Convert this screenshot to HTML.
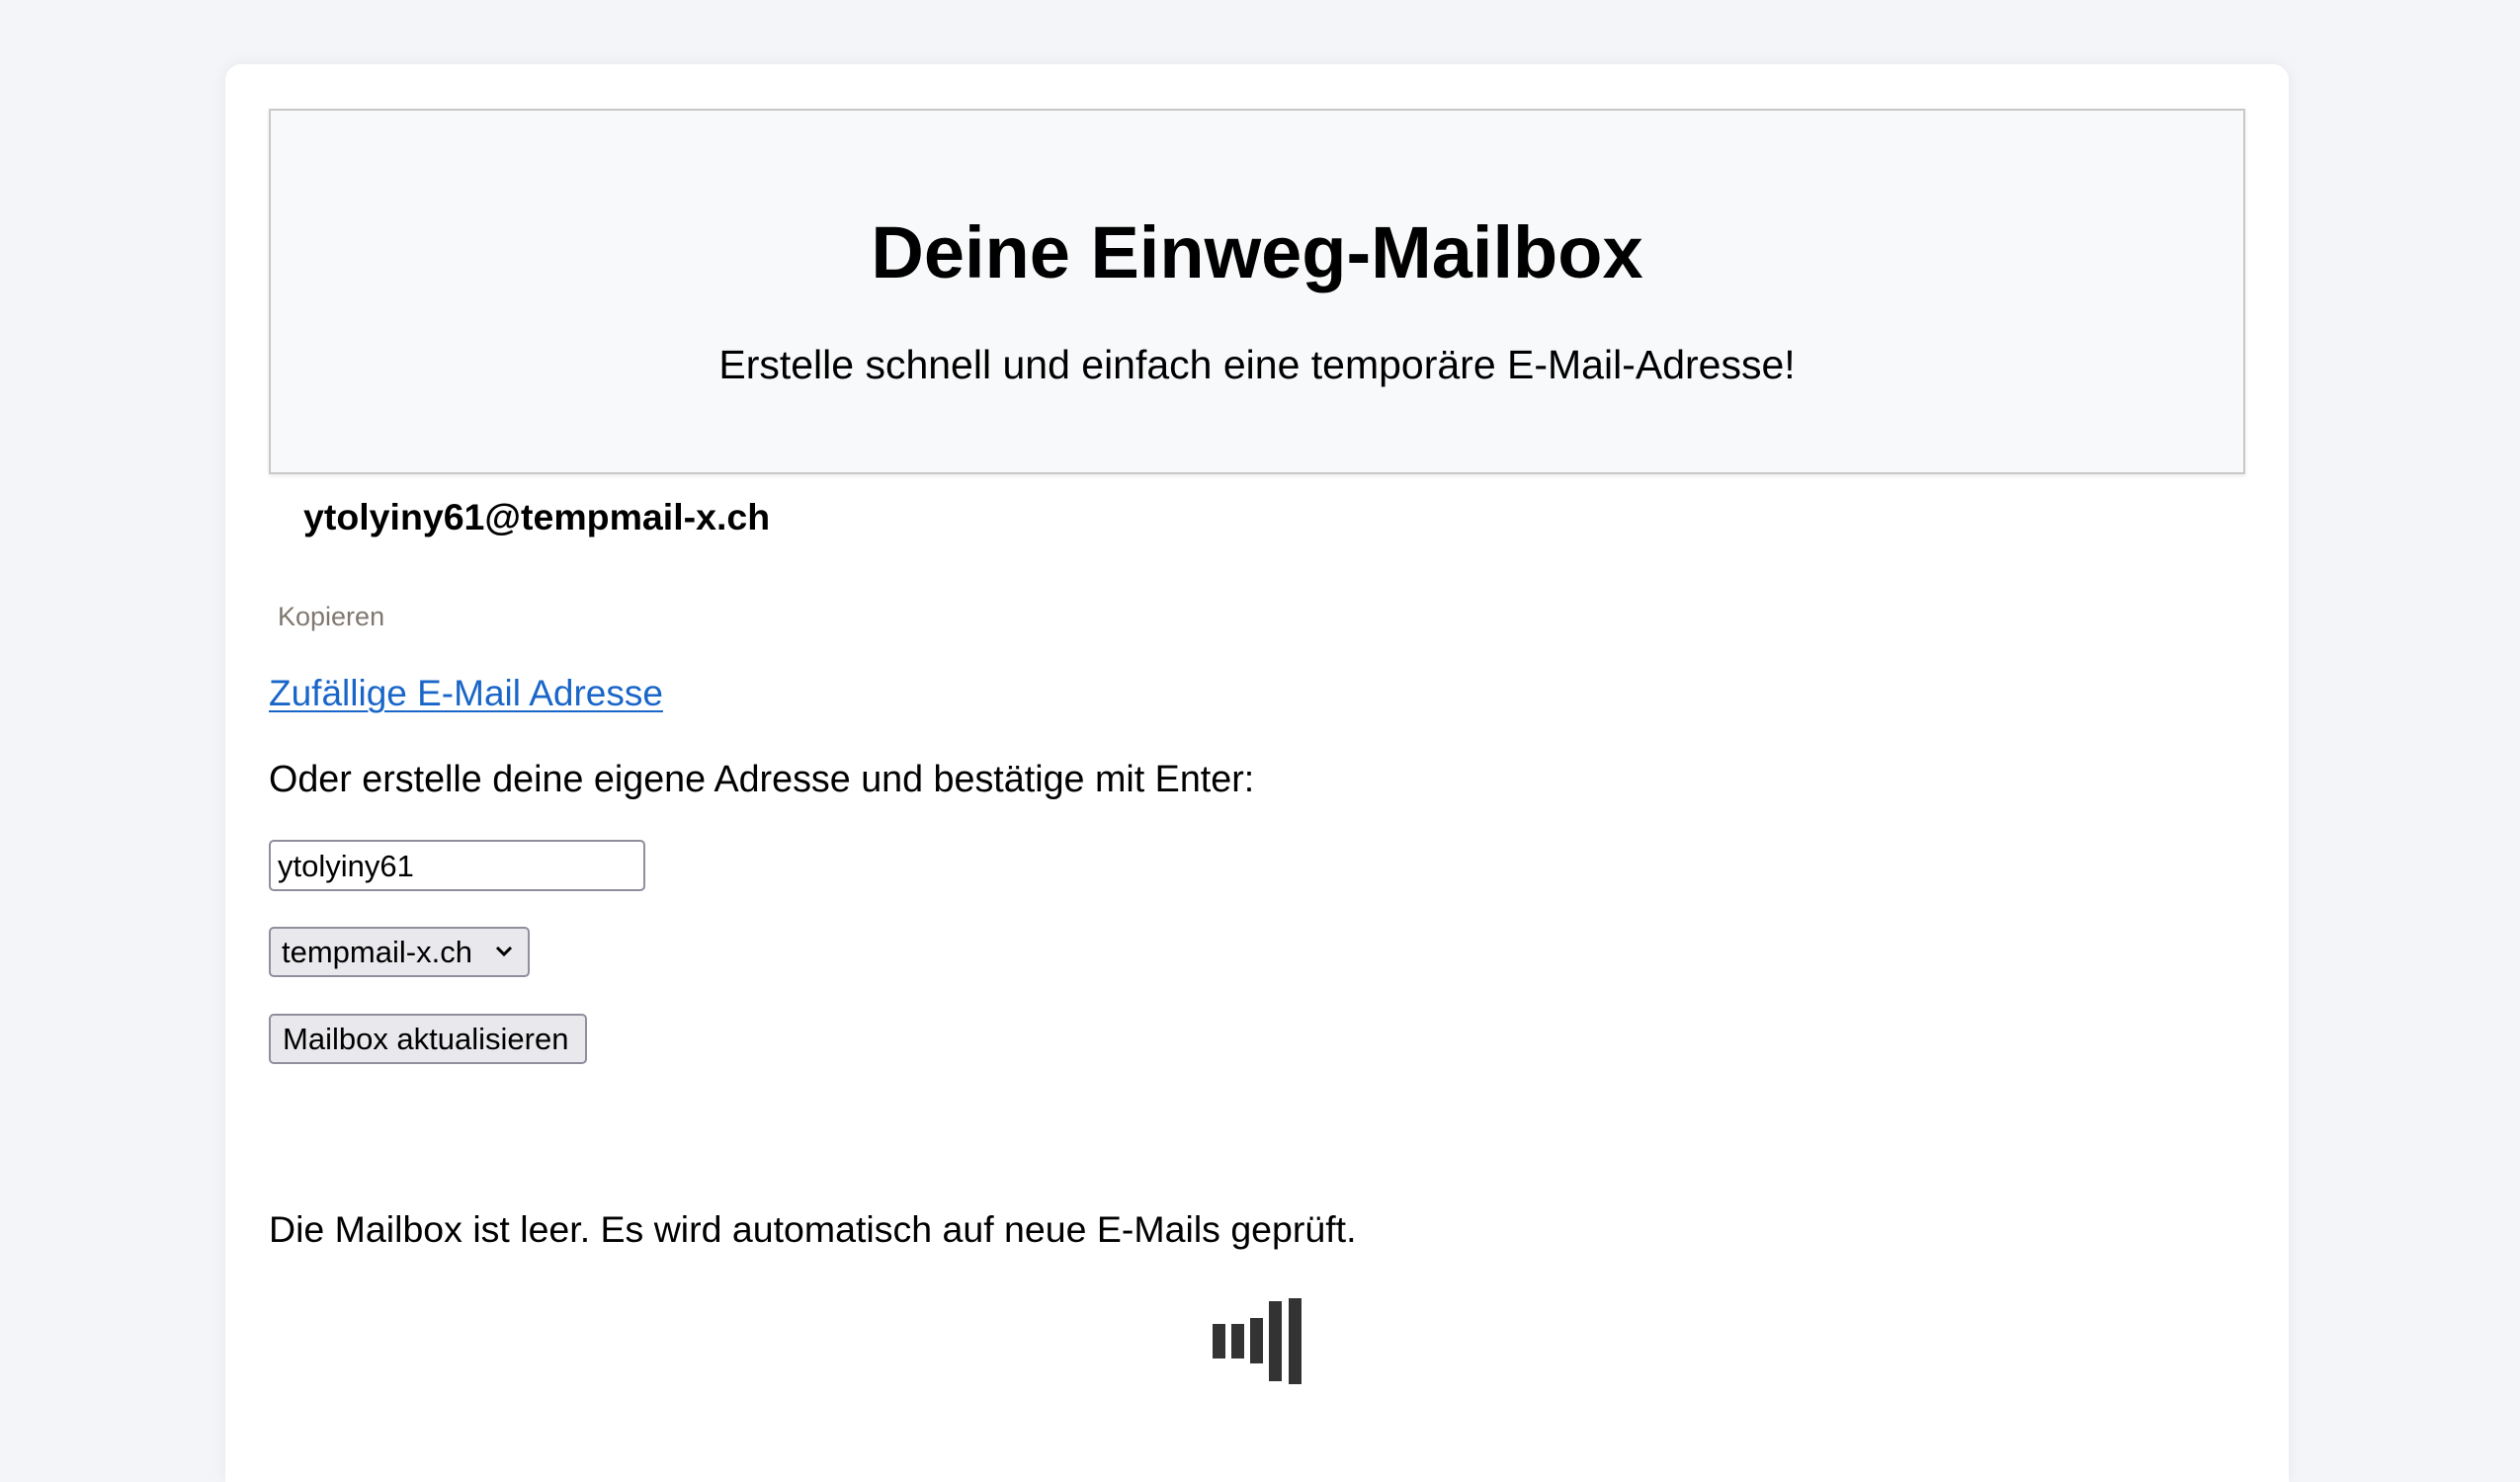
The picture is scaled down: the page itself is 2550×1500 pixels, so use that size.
<!DOCTYPE html>
<html><head><meta charset="utf-8">
<style>
html,body{margin:0;padding:0;width:2550px;height:1500px;overflow:hidden;background:#f4f5f8;font-family:"Liberation Sans",sans-serif;color:#000}
.card{position:absolute;left:228px;top:65px;width:2088px;height:1435px;background:#fff;border-radius:16px 16px 0 0;box-shadow:0 0 16px rgba(0,0,0,0.06)}
.hdr{position:absolute;left:272px;top:110px;width:1996px;height:366px;background:#f8f9fa;border:2px solid #c8c8c8;box-shadow:0 2px 4px rgba(0,0,0,0.08)}
.t{position:absolute;white-space:nowrap}
.in{position:absolute;box-sizing:border-box;border-radius:5px}
.bar{position:absolute;background:#333;width:13px}
</style></head><body>
<div class="card"></div>
<div class="hdr"></div>
<div class="t" style="left:0;width:2544px;text-align:center;top:206px;font-size:74px;font-weight:bold;line-height:100px">Deine Einweg-Mailbox</div>
<div class="t" style="left:0;width:2544px;text-align:center;top:343px;font-size:41px;line-height:52px">Erstelle schnell und einfach eine temporäre E-Mail-Adresse!</div>
<div class="t" style="left:307px;top:498px;font-size:37.5px;font-weight:bold;line-height:50px">ytolyiny61@tempmail-x.ch</div>
<div class="t" style="left:281px;top:606px;font-size:27px;color:#80786f;line-height:36px">Kopieren</div>
<div class="t" style="left:272px;top:677px;font-size:37px;color:#1a66c8;text-decoration:underline;text-decoration-thickness:2px;text-underline-offset:5px;line-height:50px">Zufällige E-Mail Adresse</div>
<div class="t" style="left:272px;top:763px;font-size:37.7px;line-height:50px">Oder erstelle deine eigene Adresse und bestätige mit Enter:</div>
<div class="in" style="left:272px;top:850px;width:381px;height:52px;border:2.5px solid #8f8f9d;background:#fff"></div>
<div class="t" style="left:281px;top:858px;font-size:31px;line-height:38px">ytolyiny61</div>
<div class="in" style="left:272px;top:938px;width:264px;height:51px;border:2.5px solid #8f8f9d;background:#e9e9ed"></div>
<div class="t" style="left:285px;top:945px;font-size:31px;line-height:38px">tempmail-x.ch</div>
<svg style="position:absolute;left:500px;top:955px" width="20" height="16"><path d="M3 4 L10 11 L17 4" fill="none" stroke="#000" stroke-width="3"/></svg>
<div class="in" style="left:272px;top:1026px;width:322px;height:51px;border:2.5px solid #8f8f9d;background:#e9e9ed"></div>
<div class="t" style="left:286px;top:1033px;font-size:31px;line-height:38px">Mailbox aktualisieren</div>
<div class="t" style="left:272px;top:1219px;font-size:37.5px;line-height:50px">Die Mailbox ist leer. Es wird automatisch auf neue E-Mails geprüft.</div>
<div class="bar" style="left:1227px;top:1340px;height:35px"></div>
<div class="bar" style="left:1246px;top:1340px;height:35px"></div>
<div class="bar" style="left:1265px;top:1334px;height:46px"></div>
<div class="bar" style="left:1284px;top:1317px;height:81px"></div>
<div class="bar" style="left:1304px;top:1314px;height:87px"></div>
</body></html>
